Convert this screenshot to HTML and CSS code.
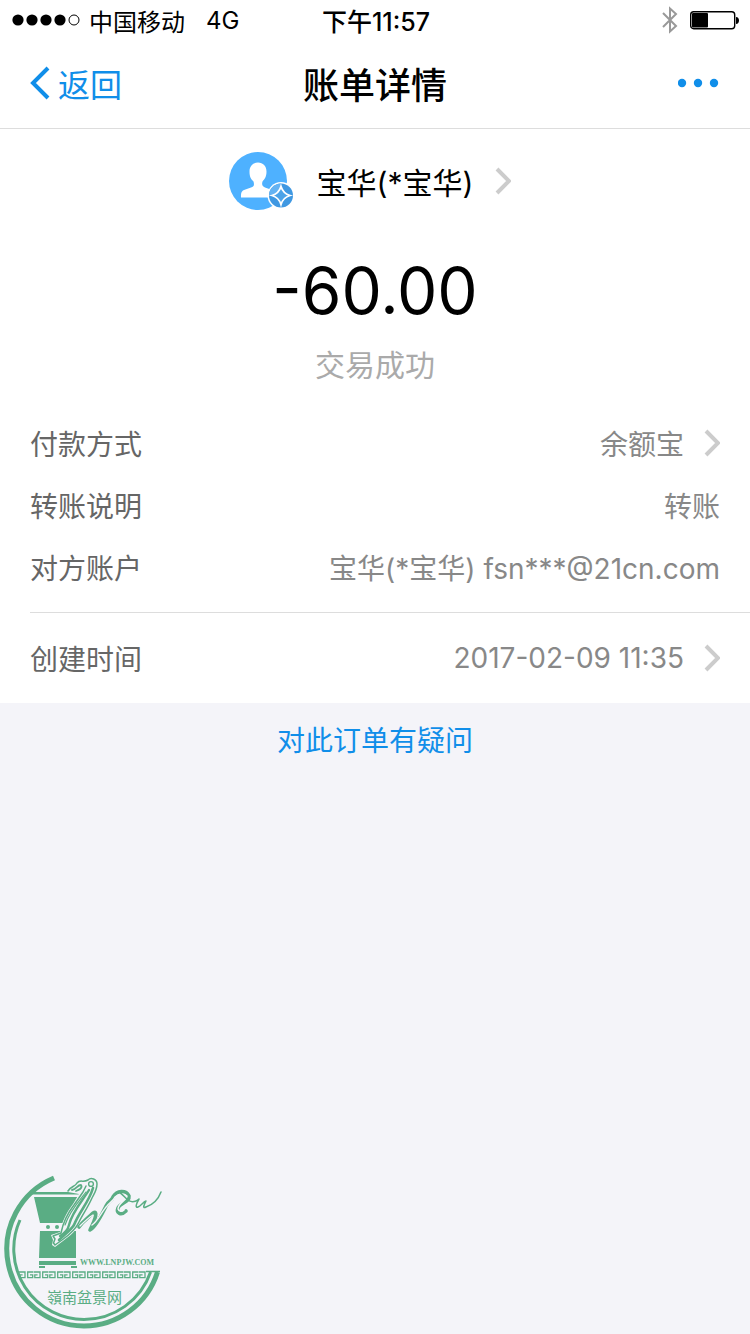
FILE: index.html
```
<!DOCTYPE html>
<html lang="zh-CN">

<head>
    <meta charset="UTF-8">
    <meta name="viewport" content="width=device-width, initial-scale=1.0">
    <title>账单详情</title>
    <link rel="stylesheet" href="styles.css">
</head>

<body>
    <div class="page">
        <div class="status">
            <div class="status-left">
                <svg class="signal" width="68" height="12" viewBox="0 0 68 12">
                    <circle cx="6" cy="6" r="5.6" />
                    <circle cx="20" cy="6" r="5.6" />
                    <circle cx="34" cy="6" r="5.6" />
                    <circle cx="48" cy="6" r="5.6" />
                    <circle cx="62" cy="6" r="5" fill="none" stroke="#000" />
                </svg>
                <span>中国移动</span>
                <span class="network">4G</span>
            </div>
            <div class="clock">下午11:57</div>
            <div class="status-right">
                <svg width="16" height="28" viewBox="0 0 16 28" fill="none" stroke="#999" stroke-width="2">
                    <path d="M1 7 L14 20 L8 25.5 V2.5 L14 8 L1 21" />
                </svg>
                <svg width="50" height="20" viewBox="0 0 50 20">
                    <rect x="0.7" y="1.7" width="44" height="17" rx="3" fill="none" stroke="#000" stroke-width="1.4" />
                    <rect x="2" y="3" width="16" height="14.5" rx="1" />
                    <path d="M46 7 C50 7 50 14 46 14 Z" />
                </svg>
            </div>
        </div>

        <header class="nav">
            <a class="back" href="#">
                <svg width="20" height="34" viewBox="0 0 20 34" fill="none" stroke="#108ee9" stroke-width="4">
                    <path d="M18 2 L3 17 L18 32" />
                </svg>
                <span>返回</span>
            </a>
            <h1>账单详情</h1>
            <button class="more" aria-label="更多">
                <svg width="42" height="10" viewBox="0 0 42 10" fill="#108ee9">
                    <circle cx="4" cy="5" r="4.2" />
                    <circle cx="20" cy="5" r="4.2" />
                    <circle cx="36" cy="5" r="4.2" />
                </svg>
            </button>
        </header>

        <main class="bill">
            <a class="payee" href="#">
                <svg width="66" height="60" viewBox="0 0 66 60">
                    <circle cx="29" cy="30" r="29" fill="#4eb1ff" />
                    <path d="M29 11.5 C34 11.5 37.5 15 37.5 20.5 C37.5 26 35.5 28 33.5 30.5 C32.5 34 33.5 35.5 36 36.5 L43 39 C46.5 40.5 46 43.5 46 46.5 H12 C12 42.5 12 40.5 15 39 L22 36.5 C25 35.5 25.5 34 24.5 30.5 C22 28 20.5 26 20.5 20.5 C20.5 15 24 11.5 29 11.5 Z" fill="#fff" />
                    <circle cx="52" cy="44.5" r="13.5" fill="#fff" />
                    <circle cx="52" cy="44.5" r="12" fill="#3f98e2" />
                    <path d="M40 44.5 A12 12 0 0 1 52 32.5 V44.5 Z" fill="#64b3f3" />
                    <path d="M52 35.5 C53.5 40.5 56 43 61 44.5 C56 46 53.5 48.5 52 53.5 C50.5 48.5 48 46 43 44.5 C48 43 50.5 40.5 52 35.5 Z" fill="#4ca3e8" stroke="#fff" stroke-width="1.8" />
                </svg>
                <span>宝华(*宝华)</span>
                <svg class="arrow" width="16" height="28" viewBox="0 0 16 28">
                    <path d="M2 2 L14 14 L2 26" />
                </svg>
            </a>
            <div class="amount">-60.00</div>
            <div class="state">交易成功</div>

            <div class="row">
                <span class="label">付款方式</span>
                <a class="value" href="#">余额宝
                    <svg class="arrow" width="16" height="28" viewBox="0 0 16 28">
                        <path d="M2 2 L14 14 L2 26" />
                    </svg>
                </a>
            </div>
            <div class="row">
                <span class="label">转账说明</span>
                <span class="value">转账</span>
            </div>
            <div class="row">
                <span class="label">对方账户</span>
                <span class="value">宝华(*宝华) fsn***@21cn.com</span>
            </div>
            <div class="row created">
                <span class="label">创建时间</span>
                <a class="value" href="#">2017-02-09 11:35
                    <svg class="arrow" width="16" height="28" viewBox="0 0 16 28">
                        <path d="M2 2 L14 14 L2 26" />
                    </svg>
                </a>
            </div>
        </main>

        <a class="question" href="#">对此订单有疑问</a>

        <svg class="logo" width="170" height="164" viewBox="0 0 170 164" fill="#5aad84">
            <defs>
                <pattern id="fret" x="19" y="101" width="15" height="8" patternUnits="userSpaceOnUse">
                    <path d="M0 1 H6 V6.7 H0.8 V3.8 H3.6 M14.5 1 H8.7 V6.7 H13.7 V3.8 H11" fill="none" stroke="#5aad84" stroke-width="1.3" />
                </pattern>
            </defs>
            <!-- rings -->
            <g fill="none" stroke="#5aad84">
                <path d="M54 8 A77 77 0 0 0 84 156 A77 77 0 0 0 157.5 102" stroke-width="5" />
                <path d="M20 50 A70.5 70.5 0 0 0 84 149.5 A70.5 70.5 0 0 0 150.6 102" stroke-width="3" />
            </g>
            <path d="M146 101.5 H160" stroke="#5aad84" stroke-width="1.5" />
            <!-- pot -->
            <path d="M31 22 H84 V24.5 H31 Z M34 27 H81 L74 53 H40 Z M40 61 H76 V88 H39 Z M39 91 H76 V95 H39 Z M39 96 H45 V98 H39 Z M71 96 H77 V98 H71 Z" />
            <circle cx="48" cy="57" r="2" />
            <circle cx="57" cy="57" r="2" />
            <path d="M74 53 L77 49 V53 Z" />
            <!-- trunk -->
            <path d="M68 22 C71 16 75 17 77 13 C80 9 83 13 88 10 C91 7 97 9 98 14 C98 20 95 24 93 28 C89 37 84 44 80 52 C77 60 70 66 63 71 L55 77 L52 75 L53 70 L51 65 L60 62 C62 52 66 43 73 34 L79 24 Z" fill="#f4f4f9" />
            <g fill="none" stroke="#5aad84" stroke-linecap="round" stroke-linejoin="round">
                <path d="M68 21 C71 16 75 17 77 13 C80 9 83 13 88 10 C91 7 97 9 97 14 C97 20 94 24 92 28 C88 37 83 44 79 52 C76 59 69 65 62 70 L55 75 L53.5 73 L55 69 L53 66 L61 63 C63 53 67 44 74 35 L83 22 L86 16" stroke-width="1.5" />
                <path d="M93 18 C89 32 79 42 74 55 C71 60 65 64 59 70" stroke-width="2.6" />
                <path d="M89 20 C83 30 72 42 69 55 C68 60 65 63 60 66" stroke-width="2.4" />
                <path d="M86 22 C80 30 70 40 65 55" stroke-width="1.2" />
                <path d="M72 20 C77 19 77 15 81 15 C83 18 79 20 76 21" stroke-width="1.8" />
                <circle cx="91" cy="14" r="2.4" stroke-width="1.4" />
            </g>
            <!-- branch -->
            <g fill="none" stroke-linejoin="round" stroke-linecap="round">
                <path d="M79 57 C83 51 87 49 93 43 C98 40 96 48 90 60 C96 57 102 44 106 36 C109 30 112 31 113 27 C117 20 126 20 129 26 C130 32 120 33 118 38 C116 43 121 46 126 41" stroke="#5aad84" stroke-width="3.6" />
                <path d="M80 56 C84 52 88 48 93 45 M92 55 C98 51 102 41 107 36 C110 32 113 31 115 27 C119 23 124 23 127 26 C127 30 118 33 118 39 C119 42 122 42 124 40" stroke="#f4f4f9" stroke-width="1.4" />
                <path d="M119 22 C126 26 127 34 136 31 L139 29 C136 34 135 38 138 37 C141 36 143 32 146 31 C144 35 142 39 146 37 C152 35 158 30 161 22" stroke="#5aad84" stroke-width="1.5" />
            </g>
            <text x="80" y="95" class="logo-url">WWW.LNPJW.COM</text>
            <rect x="19" y="101" width="128" height="8" fill="url(#fret)" />
            <text x="47" y="133" class="logo-name">嶺南盆景网</text>
        </svg>
    </div>
</body>

</html>
```
FILE: styles.css
```
* {
    box-sizing: border-box;
}

body {
    margin: 0;
    background-color: #f4f4f9;
    font-family: Inter, "Noto Sans CJK SC", sans-serif;
    color: #000;
}

a {
    color: inherit;
    text-decoration: none;
}

svg {
    display: block;
    flex: none;
}

.page {
    min-height: 100vh;
    display: flex;
    flex-direction: column;
}

.status {
    height: 40px;
    padding: 0 10px 0 12px;
    background-color: #fff;
    display: grid;
    grid-template-columns: 1fr auto 1fr;
    align-items: center;
    font-size: 24px;
}

.status-left {
    display: flex;
    align-items: center;
    gap: 9px;
}

.network {
    margin-left: 12px;
}

.clock {
    font-size: 25px;
    font-weight: 500;
}

.status-right {
    display: flex;
    justify-content: flex-end;
    align-items: center;
    gap: 12px;
}

.nav {
    height: 89px;
    padding: 0 30px 2px;
    background-color: #fff;
    border-bottom: 1px solid #ddd;
    display: grid;
    grid-template-columns: 1fr auto 1fr;
    align-items: center;
}

.back {
    display: flex;
    align-items: center;
    gap: 8px;
    color: #108ee9;
    font-size: 32px;
}

h1 {
    margin: 0;
    font-size: 36px;
    font-weight: 500;
}

.more {
    justify-self: end;
    padding: 10px 0;
    border: 0;
    background: none;
    cursor: pointer;
}

.bill {
    background-color: #fff;
}

.payee {
    height: 104px;
    padding-right: 10px;
    display: flex;
    justify-content: center;
    align-items: center;
    gap: 22px;
    font-size: 30px;
}

.arrow {
    fill: none;
    stroke: #ccc;
    stroke-width: 4;
}

.amount {
    height: 112px;
    padding-top: 2px;
    line-height: 112px;
    text-align: center;
    font-size: 64px;
}

.state {
    height: 40px;
    margin-bottom: 27px;
    line-height: 40px;
    text-align: center;
    font-size: 30px;
    color: #aaa;
}

.row {
    height: 62px;
    padding: 0 30px;
    display: flex;
    justify-content: space-between;
    align-items: center;
    font-size: 28px;
}

.label {
    color: #666;
}

.value {
    display: flex;
    align-items: center;
    gap: 20px;
    color: #888;
}

.created {
    height: 91px;
    margin-top: 14px;
    margin-left: 30px;
    padding-left: 0;
    border-top: 1px solid #ddd;
}

.question {
    align-self: center;
    padding: 16px 0;
    font-size: 28px;
    color: #108ee9;
}

.logo {
    margin-top: auto;
}

.logo-url {
    font-family: "Liberation Serif", serif;
    font-size: 8px;
    font-weight: bold;
}

.logo-name {
    font-family: "Noto Sans CJK TC", sans-serif;
    font-size: 15px;
}
```
